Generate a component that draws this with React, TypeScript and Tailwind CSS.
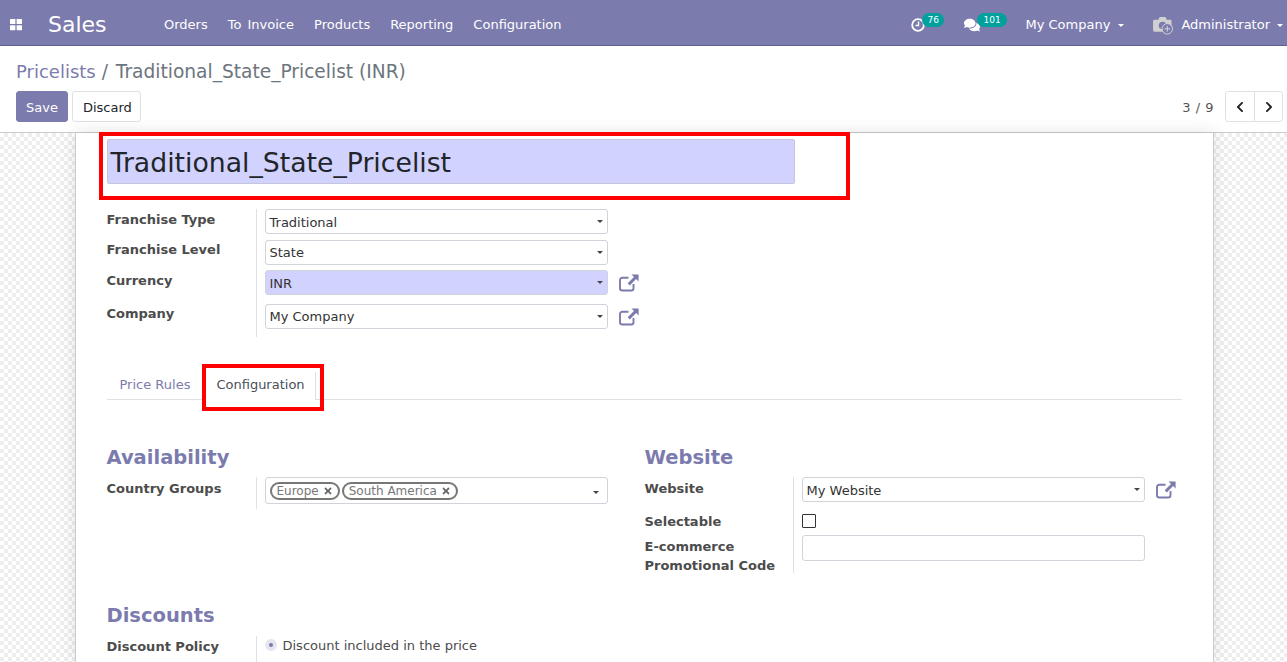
import * as React from 'react';
import { FaChevronLeft, FaChevronRight, FaComments, FaTimes } from 'react-icons/fa';

const Caret = ({ className = '' }: { className?: string }) => (
  <span className={`w-0 h-0 border-x-[3px] border-x-transparent border-t-[3px] border-t-[#444] ${className}`} />
);

const ExternalLink = () => (
  <svg viewBox="0 0 20 18" className="w-[20px] h-[18px] text-[#7c7bad]" fill="none" stroke="currentColor">
    <path d="M14.5 10v4.2a2.3 2.3 0 0 1-2.3 2.3H3.3A2.3 2.3 0 0 1 1 14.2V6a2.3 2.3 0 0 1 2.3-2.3h6.2" strokeWidth="1.9" />
    <path d="M12.5 0.4h7.1v7.1l-2.5-2.5-6.3 6.4-2.1-2.1 6.3-6.4z" fill="currentColor" stroke="none" />
  </svg>
);

const Select = ({ value, highlight, link, low }: { value: string; highlight?: boolean; link?: boolean; low?: boolean }) => (
  <div className="flex items-center">
    <div className={`w-[343px] h-[25px] flex items-center justify-between pl-[4px] pr-[4px] border border-[#ced4da] rounded-[3px] ${highlight ? 'bg-[#d2d2ff]' : 'bg-white'}`}>
      <span className={`text-[#333] ${low ? 'pt-[3px]' : 'pt-[1px]'}`}>{value}</span>
      <Caret />
    </div>
    {link && <div className="ml-[11px]"><ExternalLink /></div>}
  </div>
);

// label on the left, value cell with the thin divider on the right
const Label = ({ children, className = '' }: { children: React.ReactNode; className?: string }) => (
  <div className={`font-bold text-[#4c4c4c] leading-[19px] ${className}`}>{children}</div>
);

const Value = ({ children, className = '' }: { children: React.ReactNode; className?: string }) => (
  <div className={`border-l border-[#dee2e6] pl-[8px] ${className}`}>{children}</div>
);

const Tag = ({ text }: { text: string }) => (
  <span className="h-[18px] flex items-center gap-[4px] px-[5px] border-2 border-[#777] rounded-full text-[#777] text-[12px] leading-none">
    {text}
    <FaTimes className="w-[10px] h-[10px] text-[#666]" />
  </span>
);

const navItems = ['Orders', 'To Invoice', 'Products', 'Reporting', 'Configuration'];

export default function App() {
  return (
    <div className="h-[662px] overflow-hidden flex flex-col font-['DejaVu_Sans',sans-serif] text-[13px] text-[#212529]">
      <header className="h-[46px] shrink-0 bg-[#7c7bad] border-b border-[#5f5e97] pt-[5px] flex items-center text-white">
        <svg viewBox="0 0 12 12" className="w-[12px] h-[12px] ml-[10px] fill-white">
          <rect x="0" y="0" width="5.4" height="5" rx="0.6" />
          <rect x="6.6" y="0" width="5.4" height="5" rx="0.6" />
          <rect x="0" y="6.2" width="5.4" height="5" rx="0.6" />
          <rect x="6.6" y="6.2" width="5.4" height="5" rx="0.6" />
        </svg>
        <span className="ml-[26px] text-[22px] leading-none w-[116px]">Sales</span>
        <nav className="flex gap-[20px] [word-spacing:2px]">
          {navItems.map((item) => (
            <span key={item}>{item}</span>
          ))}
        </nav>
        <div className="ml-auto flex items-center pr-[4px]">
          <div className="relative w-[35px] h-[20px]">
            <svg viewBox="0 0 14 14" className="absolute left-[0px] top-[3px] w-[14px] h-[14px]" fill="none" stroke="white">
              <circle cx="7" cy="7" r="5.8" strokeWidth="1.8" />
              <path d="M7.500 3.500v4H4.500" strokeWidth="1.400" />
            </svg>
            <span className="absolute left-[11px] top-[-2px] h-[14px] px-[5px] rounded-[7px] bg-[#00a09d] text-[9px] leading-[14px]">76</span>
          </div>
          <div className="relative w-[61px] h-[20px] ml-[18px]">
            <FaComments className="absolute left-0 top-[2px] w-[16px] h-[16px]" />
            <span className="absolute left-[13px] top-[-2px] h-[14px] px-[6px] rounded-[7px] bg-[#00a09d] text-[9px] leading-[14px]">101</span>
          </div>
          <span>My Company</span>
          <Caret className="ml-[8px] !border-t-white" />
          <svg viewBox="0 0 22 20" className="w-[21px] h-[19px] ml-[29px]">
            <path d="M1.500 4h4l1.500-3h6l1.500 3h4A1.500 1.500 0 0 1 19.500 5.500V15A1.500 1.500 0 0 1 18 16.500H1.500A1.500 1.500 0 0 1 0 15V5.500A1.500 1.500 0 0 1 1.500 4z" fill="#d0d0d0" />
            <circle cx="10" cy="10" r="4" fill="#7c7bad" />
            <circle cx="15" cy="13.500" r="5.500" fill="#7c7bad" stroke="#d8d8d8" strokeWidth="1" />
            <path d="M15 10.500v6M12 13.500h6" stroke="#d8d8d8" strokeWidth="1" />
          </svg>
          <span className="ml-[7px]">Administrator</span>
          <Caret className="ml-[7px] !border-t-white" />
        </div>
      </header>

      <div className="h-[87px] shrink-0 bg-white border-b border-[#ccc] pl-[16px] pr-[4px] pt-[13px]">
        <div className="text-[18.6px] leading-[26px] text-[#6c757d]">
          <span className="text-[18px] text-[#7c7bad]">Pricelists</span> <span className="mr-[2px]">/</span> Traditional_State_Pricelist (INR)
        </div>
        <div className="mt-[6px] flex items-center">
          <button className="h-[31px] px-[9px] pt-[2px] bg-[#7c7bad] text-white rounded-[3px] border border-[#7c7bad]">Save</button>
          <button className="h-[31px] pl-[10px] pr-[8px] pt-[2px] ml-[4px] bg-white text-[#212529] rounded-[3px] border border-[#dee2e6]">Discard</button>
          <span className="ml-auto pt-[2px] text-[#555] tracking-[0.5px]">3 / 9</span>
          <div className="ml-[11px] flex h-[31px] border border-[#dee2e6] rounded-[3px]">
            <div className="w-[29px] flex items-center justify-center border-r border-[#dee2e6]"><FaChevronLeft className="w-[12px] h-[12px] text-[#212529]" /></div>
            <div className="w-[27px] flex items-center justify-center"><FaChevronRight className="w-[12px] h-[12px] text-[#212529]" /></div>
          </div>
        </div>
      </div>

      <main className="flex-1 min-h-0 flex justify-center pl-[1px] bg-white bg-[repeating-conic-gradient(#eeeeee_0_25%,#ffffff_0_50%)] bg-[length:8px_8px]">
        <div className="relative w-[1139px] bg-white border-x border-[#c9ccd2] pl-[31px] pr-[31px] pt-[6px] shadow-[0_0_16px_rgba(0,0,0,0.12)]">
          <div className="absolute left-[23px] top-[-1px] w-[751px] h-[68px] border-4 border-[#ff0000]" />
          <div className="w-[688px] h-[45px] bg-[#d2d2ff] border border-[#c5c5dd] rounded-[2px] pl-[3px] text-[26.7px] leading-[46px] text-[#212529]">
            Traditional_State_Pricelist
          </div>

          <div className="mt-[25px] grid grid-cols-[149px_1fr]">
            <Label className="pt-[1px]">Franchise Type</Label>
            <Value className="pb-[6px]"><Select value="Traditional" low /></Value>
            <Label>Franchise Level</Label>
            <Value className="pb-[5px]"><Select value="State" /></Value>
            <Label className="pt-[1px]">Currency</Label>
            <Value className="pb-[9px]"><Select value="INR" highlight link low /></Value>
            <Label>Company</Label>
            <Value className="pb-[8px]"><Select value="My Company" link /></Value>
          </div>

          <div className="relative mt-[35px] h-[28px] border-b border-[#dee2e6] flex">
            <span className="px-[13px] pt-[3px] text-[#7c7bad]">Price Rules</span>
            <span className="h-[28px] pl-[13px] pr-[10px] pt-[3px] bg-white border-r border-[#dee2e6] text-[#495057]">Configuration</span>
            <div className="absolute left-[95px] top-[-8px] w-[122px] h-[47px] border-4 border-[#ff0000]" />
          </div>

          <div className="mt-[45px] grid grid-cols-[538px_1fr]">
            <div>
              <h2 className="text-[19.5px] leading-[26px] font-bold text-[#7c7bad]">Availability</h2>
              <div className="mt-[6px] grid grid-cols-[149px_1fr]">
                <Label className="pt-[2px]">Country Groups</Label>
                <Value className="pb-[5px]">
                  <div className="w-[343px] h-[27px] flex items-center justify-between pl-[4px] pr-[8px] border border-[#ced4da] rounded-[3px]">
                    <div className="flex gap-[2px]">
                      <Tag text="Europe" />
                      <Tag text="South America" />
                    </div>
                    <Caret className="mt-[4px]" />
                  </div>
                </Value>
              </div>
            </div>
            <div>
              <h2 className="text-[19.5px] leading-[26px] font-bold text-[#7c7bad]">Website</h2>
              <div className="mt-[6px] grid grid-cols-[148px_1fr]">
                <Label className="pt-[2px]">Website</Label>
                <Value className="pb-[10px]"><Select value="My Website" link low /></Value>
                <Label>Selectable</Label>
                <Value className="pb-[7px]">
                  <div className="w-[14px] h-[14px] mt-[2px] border border-[#333] rounded-[1px]" />
                </Value>
                <Label className="pt-[2px] -mb-[2px]">E-commerce Promotional Code</Label>
                <Value className="pb-[12px]">
                  <div className="w-[343px] h-[26px] border border-[#ced4da] rounded-[3px]" />
                </Value>
              </div>
            </div>
          </div>

          <h2 className="mt-[30px] text-[19.5px] leading-[26px] font-bold text-[#7c7bad]">Discounts</h2>
          <div className="mt-[7px] grid grid-cols-[149px_1fr]">
            <Label className="pt-[1px]">Discount Policy</Label>
            <Value className="pb-[10px]">
              <div className="flex items-center h-[19px]">
                <span className="w-[12px] h-[12px] mb-[2px] rounded-full bg-[#e6e6f0] flex items-center justify-center">
                  <span className="w-[4px] h-[4px] rounded-full bg-[#7c7bad]" />
                </span>
                <span className="ml-[6px] pt-[1px] text-[#4c4c4c]">Discount included in the price</span>
              </div>
            </Value>
          </div>
        </div>
      </main>
    </div>
  );
}
